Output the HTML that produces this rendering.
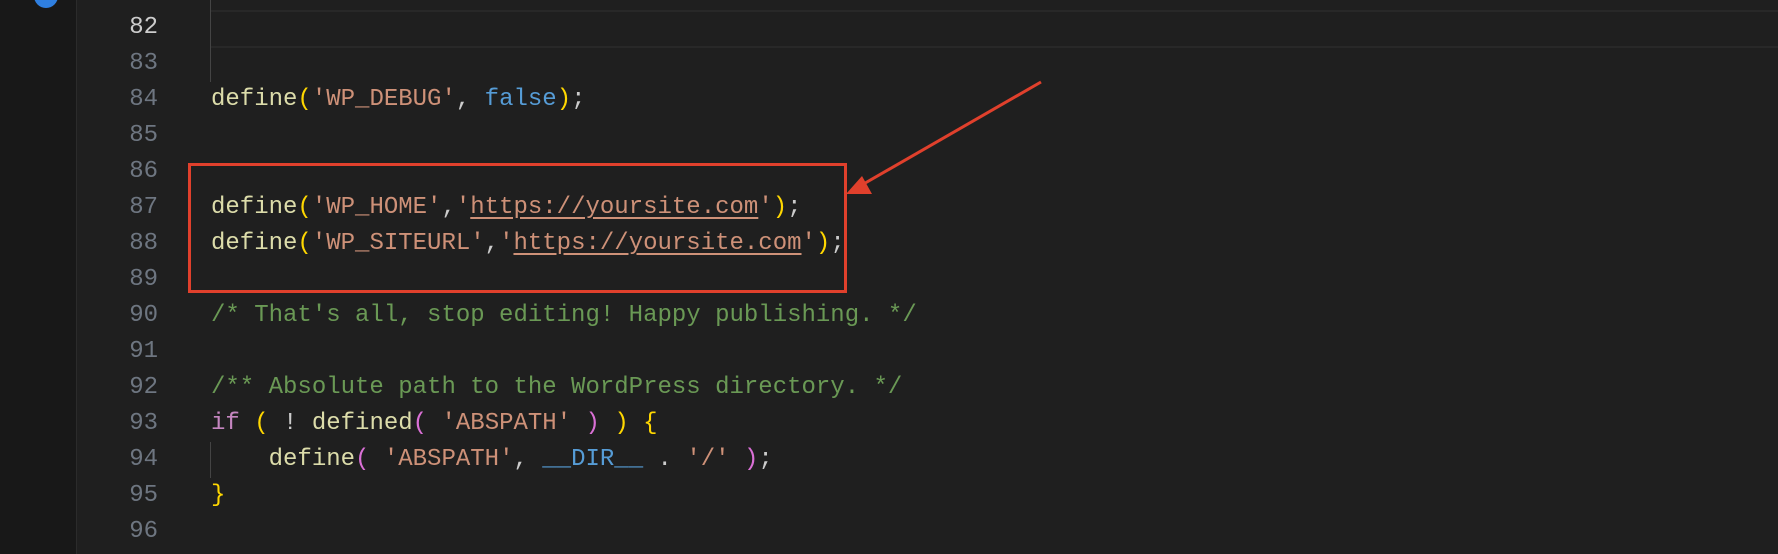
<!DOCTYPE html>
<html><head><style>
html,body{margin:0;padding:0;width:1778px;height:554px;overflow:hidden;background:#1f1f1f;}
.gut{position:absolute;left:0;top:0;width:76px;height:554px;background:#181818;border-right:1px solid #2b2b2b;}
.dot{position:absolute;left:34px;top:-16px;width:24px;height:24px;border-radius:50%;background:#2f7fe0;}
.ln{position:absolute;left:80px;width:78px;text-align:right;font:24px "Liberation Mono",monospace;color:#6e7681;line-height:36px;}
.code{position:absolute;left:211px;font:24px "Liberation Mono",monospace;color:#cccccc;line-height:36px;white-space:pre;}
.f{color:#dcdcaa}.s{color:#ce9178}.b{color:#569cd6}.y{color:#ffd700}.c{color:#6a9955}.k{color:#c586c0}.p{color:#da70d6}
.u{text-decoration:underline;text-underline-offset:4px;}
</style></head><body>
<div class="gut"></div><div class="dot"></div>
<div style="position:absolute;left:211px;top:10px;right:0;height:34px;border-top:2px solid #282828;border-bottom:2px solid #282828;"></div>
<div style="position:absolute;left:210px;top:0;width:1px;height:82px;background:#444;"></div>
<div style="position:absolute;left:210px;top:442px;width:1px;height:36px;background:#444;"></div>
<div class="ln" style="top:10px;color:#cccccc">82</div>
<div class="ln" style="top:46px">83</div>
<div class="ln" style="top:82px">84</div>
<div class="ln" style="top:118px">85</div>
<div class="ln" style="top:154px">86</div>
<div class="ln" style="top:190px">87</div>
<div class="ln" style="top:226px">88</div>
<div class="ln" style="top:262px">89</div>
<div class="ln" style="top:298px">90</div>
<div class="ln" style="top:334px">91</div>
<div class="ln" style="top:370px">92</div>
<div class="ln" style="top:406px">93</div>
<div class="ln" style="top:442px">94</div>
<div class="ln" style="top:478px">95</div>
<div class="ln" style="top:514px">96</div>
<div class="code" style="top:82px"><span class="f">define</span><span class="y">(</span><span class="s">'WP_DEBUG'</span>, <span class="b">false</span><span class="y">)</span>;</div>
<div class="code" style="top:190px"><span class="f">define</span><span class="y">(</span><span class="s">'WP_HOME'</span>,<span class="s">'<span class="u">https://yoursite.com</span>'</span><span class="y">)</span>;</div>
<div class="code" style="top:226px"><span class="f">define</span><span class="y">(</span><span class="s">'WP_SITEURL'</span>,<span class="s">'<span class="u">https://yoursite.com</span>'</span><span class="y">)</span>;</div>
<div class="code c" style="top:298px">/* That's all, stop editing! Happy publishing. */</div>
<div class="code c" style="top:370px">/** Absolute path to the WordPress directory. */</div>
<div class="code" style="top:406px"><span class="k">if</span> <span class="y">(</span> ! <span class="f">defined</span><span class="p">(</span> <span class="s">'ABSPATH'</span> <span class="p">)</span> <span class="y">)</span> <span class="y">{</span></div>
<div class="code" style="top:442px">    <span class="f">define</span><span class="p">(</span> <span class="s">'ABSPATH'</span>, <span class="b">__DIR__</span> . <span class="s">'/'</span> <span class="p">)</span>;</div>
<div class="code" style="top:478px"><span class="y">}</span></div>
<div style="position:absolute;left:188px;top:163px;width:653px;height:124px;border:3px solid #e0402c;"></div>
<svg width="1778" height="554" style="position:absolute;left:0;top:0">
<line x1="1041" y1="82" x2="860" y2="186" stroke="#e0402c" stroke-width="3"/>
<polygon points="846,194 862,176 872,194" fill="#e0402c"/>
</svg>
</body></html>
